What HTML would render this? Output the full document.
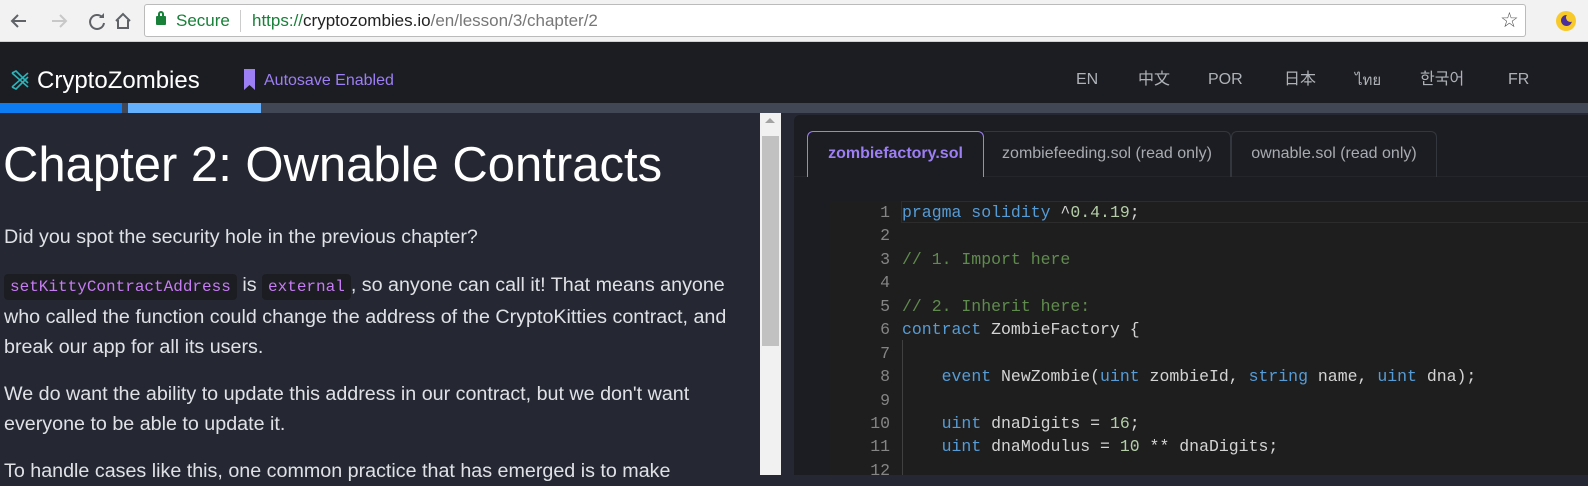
<!DOCTYPE html>
<html><head><meta charset="utf-8"><style>
*{margin:0;padding:0;box-sizing:border-box}
body{width:1588px;height:475px;overflow:hidden;background:#252832;font-family:"Liberation Sans",Arial,sans-serif;position:relative}
.abs{position:absolute}
#chrome{left:0;top:0;width:1588px;height:42px;background:#f2f2f2;border-bottom:1px solid #d0d0d0}
#url{left:144px;top:4px;width:1382px;height:33px;background:#fff;border:1px solid #bbb;border-radius:3px}
#hdr{left:0;top:42px;width:1588px;height:61px;background:#1c1d22}
.lang{top:70px;height:20px;line-height:20px;color:#aeb2b8;font-size:16px;font-family:"Liberation Sans","Noto Sans CJK KR",sans-serif}
#prog{left:0;top:103px;width:1588px;height:10px;background:#414755}
p{color:#dfe1e6;font-size:19.7px;line-height:30px}
code{font-family:"Liberation Mono",monospace;font-size:16px;color:#c67cf2;background:#1c1d22;padding:4px 6px;border-radius:4px}
.ln{position:absolute;left:830px;width:60px;text-align:right;color:#858585;font-family:"Liberation Mono",monospace;font-size:16.5px}
.cl{position:absolute;left:902px;color:#d4d4d4;font-family:"Liberation Mono",monospace;font-size:16.5px;white-space:pre}
.k{color:#569cd6}.c{color:#608b4e}.n{color:#b5cea8}
</style></head><body>
<div id="chrome" class="abs"></div>
<svg class="abs" style="left:8px;top:10px" width="130" height="22" viewBox="0 0 130 22">
<path d="M18 11H4M10 5L4 11l6 6" stroke="#5f6368" stroke-width="2" fill="none"/>
<path d="M44 11h14M52 5l6 6-6 6" stroke="#c8c8c8" stroke-width="2" fill="none"/>
<path d="M94 7a7 7 0 1 0 2 6" stroke="#5f6368" stroke-width="2" fill="none"/><path d="M96 3v5h-5z" fill="#5f6368"/>
<path d="M108 11l7-7 7 7M110 10v8h10v-8" stroke="#5f6368" stroke-width="2" fill="none"/>
</svg>
<div id="url" class="abs"></div>
<div class="abs" style="left:156px;top:16px;width:10px;height:9px;background:#188038;border-radius:1px"></div>
<div class="abs" style="left:158px;top:11px;width:6px;height:7px;border:2px solid #188038;border-bottom:none;border-radius:3px 3px 0 0"></div>
<div class="abs" style="left:176px;top:11px;font-size:17px;color:#188038">Secure</div>
<div class="abs" style="left:240px;top:10px;width:1px;height:22px;background:#ccc"></div>
<div class="abs" style="left:252px;top:11px;font-size:17px;color:#777"><span style="color:#188038">https://</span><span style="color:#222">cryptozombies.io</span>/en/lesson/3/chapter/2</div>
<div class="abs" style="left:1500px;top:8px;font-size:21px;color:#555">☆</div>
<div class="abs" style="left:1556px;top:11px;width:20px;height:20px;border-radius:50%;background:#f8c92b"></div>
<div class="abs" style="left:1561px;top:15px;width:11px;height:11px;border-radius:50%;background:#4b2f9a"></div>
<div class="abs" style="left:1566px;top:13px;width:9px;height:9px;border-radius:50%;background:#f8c92b"></div>
<div id="hdr" class="abs"></div>
<svg class="abs" style="left:9px;top:70px" width="22" height="20" viewBox="0 0 22 20"><path d="M3 3l16 14M19 3L3 17M3 3l4-2 12 12M3 17l4 2 12-12" stroke="#2bb3b8" stroke-width="1.6" fill="none"/></svg>
<div class="abs" style="left:37px;top:67px;font-size:24px;color:#fff">CryptoZombies</div>
<svg class="abs" style="left:243px;top:69px" width="14" height="22"><path d="M1 0h11v21l-5.5-5L1 21z" fill="#9d7ff5"/></svg>
<div class="abs" style="left:264px;top:72px;font-size:16px;color:#9d7ff5">Autosave Enabled</div>
<div class="abs lang" style="left:1076px">EN</div>
<div class="abs lang" style="left:1138px">中文</div>
<div class="abs lang" style="left:1208px">POR</div>
<div class="abs lang" style="left:1284px">日本</div>
<div class="abs lang" style="left:1355px;font-family:'DejaVu Sans',sans-serif;font-size:15px">ไทย</div>
<div class="abs lang" style="left:1420px">한국어</div>
<div class="abs lang" style="left:1508px">FR</div>
<div id="prog" class="abs"></div>
<div class="abs" style="left:0;top:103px;width:122px;height:10px;background:#0d7cf2"></div>
<div class="abs" style="left:128px;top:103px;width:133px;height:10px;background:#64b0fd"></div>

<div class="abs" style="left:3px;top:137px;font-size:49px;color:#fff;white-space:nowrap">Chapter 2: Ownable Contracts</div>
<div class="abs" style="left:4px;top:222px;width:750px">
<p>Did you spot the security hole in the previous chapter?</p>
<p style="margin-top:18px"><code>setKittyContractAddress</code> is <code>external</code>, so anyone can call it! That means anyone who called the function could change the address of the CryptoKitties contract, and break our app for all its users.</p>
<p style="margin-top:17px">We do want the ability to update this address in our contract, but we don't want everyone to be able to update it.</p>
<p style="margin-top:17px">To handle cases like this, one common practice that has emerged is to make</p>
</div>

<div class="abs" style="left:760px;top:113px;width:21px;height:362px;background:#f1f1f1"></div>
<div class="abs" style="left:762px;top:136px;width:17px;height:210px;background:#c1c1c1"></div>
<div class="abs" style="left:765px;top:118px;width:0;height:0;border-left:5px solid transparent;border-right:5px solid transparent;border-bottom:5px solid #a3a3a3"></div>

<div class="abs" style="left:794px;top:115px;width:794px;height:360px;background:#1c1d22;border-radius:6px 0 0 0"></div>
<div class="abs" style="left:794px;top:176px;width:794px;height:1px;background:#24252b"></div>
<div class="abs" style="left:807px;top:131px;width:177px;height:46px;border:1px solid #9d7ff5;border-bottom:none;border-radius:6px 6px 0 0;background:#1c1d22;color:#9d7ff5;font-weight:bold;font-size:16px;text-align:center;line-height:44px">zombiefactory.sol</div>
<div class="abs" style="left:984px;top:131px;width:247px;height:46px;border:1px solid #34363d;border-bottom:none;border-left:none;border-radius:0 6px 0 0;color:#a8abb1;font-size:16px;text-align:center;line-height:44px">zombiefeeding.sol (read only)</div>
<div class="abs" style="left:1231px;top:131px;width:206px;height:46px;border:1px solid #34363d;border-bottom:none;border-radius:6px 6px 0 0;color:#a8abb1;font-size:16px;text-align:center;line-height:44px">ownable.sol (read only)</div>
<div class="abs" style="left:830px;top:201px;width:758px;height:274px;background:#1e1e1e"></div>
<div class="abs" style="left:901px;top:201px;width:687px;height:22px;border:1px solid #2c2c2c;border-right:none"></div>
<div class="abs" style="left:902px;top:340px;width:1px;height:135px;background:#404040"></div>
<div class="ln" style="top:203px">1</div><div class="cl" style="top:203px"><span class="k">pragma solidity</span> ^<span class="n">0.4.19</span>;</div>
<div class="ln" style="top:226px">2</div>
<div class="ln" style="top:250px">3</div><div class="cl c" style="top:250px">// 1. Import here</div>
<div class="ln" style="top:273px">4</div>
<div class="ln" style="top:297px">5</div><div class="cl c" style="top:297px">// 2. Inherit here:</div>
<div class="ln" style="top:320px">6</div><div class="cl" style="top:320px"><span class="k">contract</span> ZombieFactory {</div>
<div class="ln" style="top:344px">7</div>
<div class="ln" style="top:367px">8</div><div class="cl" style="top:367px">    <span class="k">event</span> NewZombie(<span class="k">uint</span> zombieId, <span class="k">string</span> name, <span class="k">uint</span> dna);</div>
<div class="ln" style="top:391px">9</div>
<div class="ln" style="top:414px">10</div><div class="cl" style="top:414px">    <span class="k">uint</span> dnaDigits = <span class="n">16</span>;</div>
<div class="ln" style="top:437px">11</div><div class="cl" style="top:437px">    <span class="k">uint</span> dnaModulus = <span class="n">10</span> ** dnaDigits;</div>
<div class="ln" style="top:461px">12</div>
</body></html>
